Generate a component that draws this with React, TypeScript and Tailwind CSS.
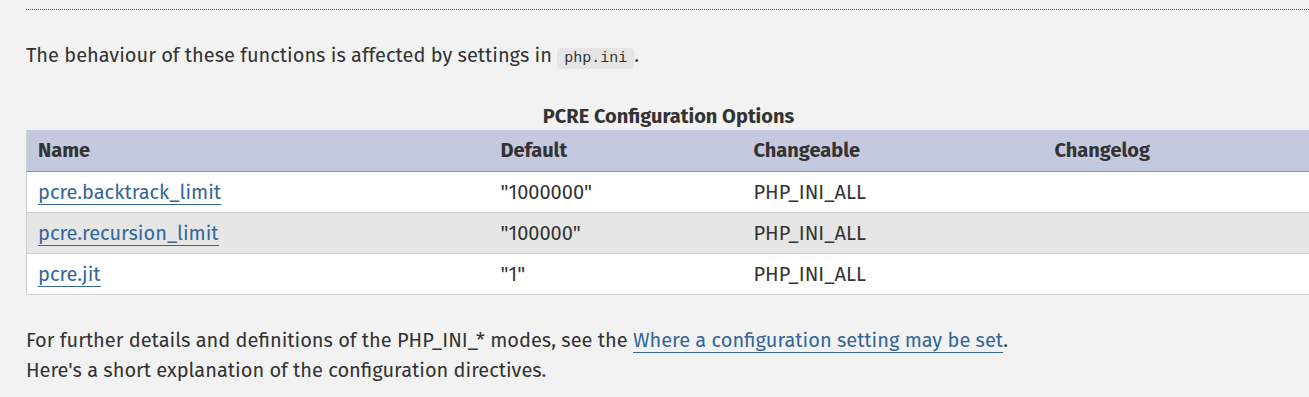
const rows = [
  { name: "pcre.backtrack_limit", def: '"1000000"', changeable: "PHP_INI_ALL", changelog: "" },
  { name: "pcre.recursion_limit", def: '"100000"', changeable: "PHP_INI_ALL", changelog: "" },
  { name: "pcre.jit", def: '"1"', changeable: "PHP_INI_ALL", changelog: "" },
];

function Link({ children }: { children: React.ReactNode }) {
  return (
    <a href="#" className="text-[#369] border-b border-[#369] no-underline">
      {children}
    </a>
  );
}

export default function App() {
  return (
    <div className="min-h-[397px] overflow-hidden bg-[#f2f2f2] text-[20px] leading-[30px] text-[#333] font-['Fira_Sans',Roboto,sans-serif]">
      <div className="pl-[26px] pt-[9px]">
        <hr className="border-0 border-t border-dotted border-[#793862]" />

        <p className="mt-[30px]">
          The behaviour of these functions is affected by settings in{" "}
          <code className="rounded bg-[#e5e5e5] px-[7px] py-[2px] font-['Liberation_Mono',monospace] text-[15px] text-[#333]">
            php.ini
          </code>
          .
        </p>

        <table className="mt-[28px] w-[1285px] border-collapse border-x border-b border-[#d0d0d0] text-left">
          <caption className="font-bold leading-[28px]">PCRE Configuration Options</caption>
          <thead>
            <tr className="h-[41px] border-b border-[#8892bf] bg-[#c4c9df]">
              <th className="w-[463px] px-[11px] font-bold">Name</th>
              <th className="w-[253px] px-[11px] font-bold">Default</th>
              <th className="w-[301px] px-[11px] font-bold">Changeable</th>
              <th className="px-[11px] font-bold">Changelog</th>
            </tr>
          </thead>
          <tbody>
            {rows.map((r, i) => (
              <tr
                key={r.name}
                className={`h-[41px] border-b border-[#d0d0d0] ${i % 2 === 1 ? "bg-[#e6e6e6]" : "bg-white"}`}
              >
                <td className="px-[11px]">
                  <Link>{r.name}</Link>
                </td>
                <td className="px-[11px]">{r.def}</td>
                <td className="px-[11px]">{r.changeable}</td>
                <td className="px-[11px]">{r.changelog}</td>
              </tr>
            ))}
          </tbody>
        </table>

        <p className="mt-[30px]">
          For further details and definitions of the PHP_INI_* modes, see the{" "}
          <Link>Where a configuration setting may be set</Link>.
          <br />
          Here's a short explanation of the configuration directives.
        </p>
      </div>
    </div>
  );
}
